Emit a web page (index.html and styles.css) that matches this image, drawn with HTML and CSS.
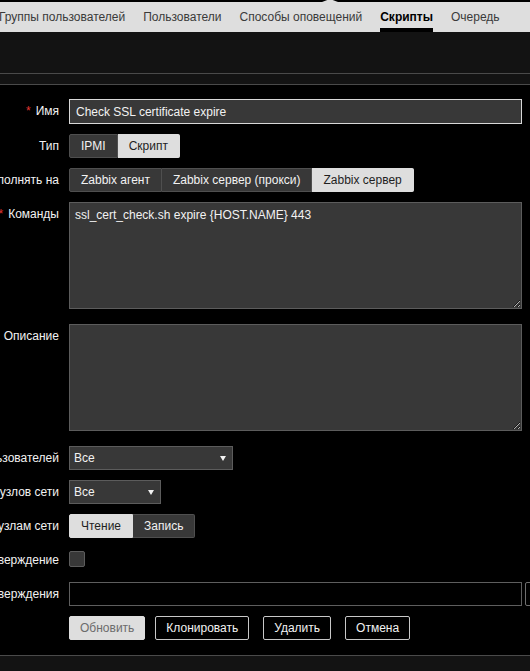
FILE: index.html
```html
<!DOCTYPE html>
<html lang="ru">
<head>
    <meta charset="UTF-8">
    <meta name="viewport" content="width=device-width, initial-scale=1.0">
    <title>Скрипты</title>
    <link rel="stylesheet" href="styles.css">
</head>
<body>
    <div class="top-strip"><span class="pointer"></span></div>

    <nav class="subnav">
        <ul>
            <li><a href="#">Группы пользователей</a></li>
            <li><a href="#">Пользователи</a></li>
            <li><a href="#">Способы оповещений</a></li>
            <li class="selected"><a href="#">Скрипты</a></li>
            <li><a href="#">Очередь</a></li>
        </ul>
    </nav>

    <header class="page-header"></header>
    <div class="page-filter"></div>

    <main class="content">
        <form class="form-list">
            <label class="form-label"><span class="req">*</span>Имя</label>
            <div class="form-field">
                <input type="text" class="text-input text-input--active" value="Check SSL certificate expire">
            </div>

            <label class="form-label">Тип</label>
            <div class="form-field">
                <div class="radio-segmented">
                    <button type="button">IPMI</button>
                    <button type="button" class="on">Скрипт</button>
                </div>
            </div>

            <label class="form-label">Выполнять на</label>
            <div class="form-field">
                <div class="radio-segmented">
                    <button type="button">Zabbix агент</button>
                    <button type="button">Zabbix сервер (прокси)</button>
                    <button type="button" class="on">Zabbix сервер</button>
                </div>
            </div>

            <label class="form-label"><span class="req">*</span>Команды</label>
            <div class="form-field">
                <textarea class="text-area">ssl_cert_check.sh expire {HOST.NAME} 443</textarea>
            </div>

            <label class="form-label">Описание</label>
            <div class="form-field">
                <textarea class="text-area"></textarea>
            </div>

            <label class="form-label">Группа пользователей</label>
            <div class="form-field">
                <span class="select-wrap select-wrap--wide">
                    <select><option>Все</option></select>
                </span>
            </div>

            <label class="form-label">Группа узлов сети</label>
            <div class="form-field">
                <span class="select-wrap">
                    <select><option>Все</option></select>
                </span>
            </div>

            <label class="form-label">Требуемый доступ к узлам сети</label>
            <div class="form-field">
                <div class="radio-segmented">
                    <button type="button" class="on">Чтение</button>
                    <button type="button">Запись</button>
                </div>
            </div>

            <label class="form-label">Включить подтверждение</label>
            <div class="form-field">
                <input type="checkbox" class="checkbox">
            </div>

            <label class="form-label">Текст подтверждения</label>
            <div class="form-field form-field--row">
                <input type="text" class="text-input text-input--plain">
                <button type="button" class="btn-side">Тест подтверждения</button>
            </div>

            <div class="form-label"></div>
            <div class="form-field form-buttons">
                <button type="button" class="btn btn--main">Обновить</button>
                <button type="button" class="btn">Клонировать</button>
                <button type="button" class="btn">Удалить</button>
                <button type="button" class="btn">Отмена</button>
            </div>
        </form>
    </main>

    <footer class="page-footer"></footer>
</body>
</html>
```

FILE: styles.css
```css
* {
    margin: 0;
    padding: 0;
    box-sizing: border-box;
}

body {
    font-family: "Liberation Sans", Arial, sans-serif;
    font-size: 12px;
    color: #f2f2f2;
    background: #000;
    overflow: hidden;
}

/* thin strip above the second level menu */
.top-strip {
    position: relative;
    height: 2px;
    background: #000;
}

.top-strip .pointer {
    position: absolute;
    left: 322px;
    bottom: 0;
    width: 0;
    height: 0;
    border-left: 8px solid transparent;
    border-right: 8px solid transparent;
    border-bottom: 3px solid #dedede;
}

.subnav {
    background: #dedede;
    height: 30px;
}

.subnav ul {
    display: flex;
    list-style: none;
    margin-left: -10px;
}

.subnav li {
    padding: 0 9px;
}

.subnav a {
    display: block;
    height: 30px;
    line-height: 30px;
    color: #3a3a3a;
    text-decoration: none;
    white-space: nowrap;
}

.subnav li.selected a {
    color: #000;
    font-weight: bold;
    box-shadow: inset 0 -4px 0 #000;
}

.page-header {
    height: 42px;
    background: #131313;
    border-bottom: 1px solid #4a4a4a;
}

.page-filter {
    height: 11px;
    background: #131313;
    border-bottom: 1px solid #4a4a4a;
}

.content {
    padding: 14px 0 15px;
}

.form-list {
    display: grid;
    grid-template-columns: 59px 453px;
    column-gap: 10px;
    row-gap: 10px;
}

.form-label {
    display: flex;
    justify-content: flex-end;
    white-space: nowrap;
    line-height: 24px;
    color: #f2f2f2;
}

.req {
    color: #e33734;
    margin-right: 5px;
}

.form-field {
    display: flex;
    align-items: flex-start;
}

.form-field--row {
    gap: 3px;
}

.text-input {
    width: 453px;
    height: 24px;
    padding: 0 6px;
    font: inherit;
    color: #f2f2f2;
    background: #383838;
    border: 1px solid #4f4f4f;
    outline: none;
    flex-shrink: 0;
}

.text-input--active {
    height: 25px;
    border-color: #d8d8d8;
}

.text-input--plain {
    background: #000;
    border-color: #5e5e5e;
}

.btn-side {
    flex-shrink: 0;
    height: 24px;
    padding: 0 11px;
    font: inherit;
    color: #f2f2f2;
    background: #000;
    border: 1px solid #6e6e6e;
    border-radius: 2px;
}

.text-area {
    display: block;
    width: 453px;
    height: 107px;
    margin-bottom: 5px;
    padding: 5px;
    font: inherit;
    color: #f2f2f2;
    background: #383838;
    border: 1px solid #5c5c5c;
    outline: none;
}

.radio-segmented {
    display: inline-flex;
}

.radio-segmented button {
    height: 24px;
    padding: 0 11px;
    font: inherit;
    color: #f2f2f2;
    background: #383838;
    border: 1px solid #4f4f4f;
    border-left-width: 0;
    cursor: pointer;
}

.radio-segmented button:first-child {
    border-left-width: 1px;
    border-radius: 2px 0 0 2px;
}

.radio-segmented button:last-child {
    border-radius: 0 2px 2px 0;
}

.radio-segmented button.on {
    color: #1f1f1f;
    background: #dedede;
    border-color: #dedede;
}

.select-wrap {
    position: relative;
    display: inline-block;
    width: 92px;
}

.select-wrap--wide {
    width: 164px;
}

.select-wrap select {
    appearance: none;
    width: 100%;
    height: 24px;
    padding: 0 4px;
    font: inherit;
    color: #f2f2f2;
    background: #383838;
    border: 1px solid #5c5c5c;
    outline: none;
}

/* small down arrow of the dropdowns */
.select-wrap::after {
    content: "";
    position: absolute;
    right: 7px;
    top: 10px;
    border-left: 3px solid transparent;
    border-right: 3px solid transparent;
    border-top: 5px solid #f2f2f2;
    pointer-events: none;
}

.checkbox {
    appearance: none;
    width: 16px;
    height: 16px;
    margin-top: 3px;
    background: #383838;
    border: 1px solid #5c5c5c;
    border-radius: 2px;
}

.form-buttons {
    gap: 10px;
}

.btn {
    height: 24px;
    padding: 0 10px;
    font: inherit;
    color: #f2f2f2;
    background: #000;
    border: 1px solid #c8c8c8;
    border-radius: 2px;
    cursor: pointer;
}

.btn + .btn + .btn {
    margin-left: 4px;
}

.btn--main {
    color: #6c6c6c;
    background: #dedede;
    border-color: #dedede;
}

.page-footer {
    height: 20px;
    background: #131313;
    border-top: 1px solid #4a4a4a;
}
```
